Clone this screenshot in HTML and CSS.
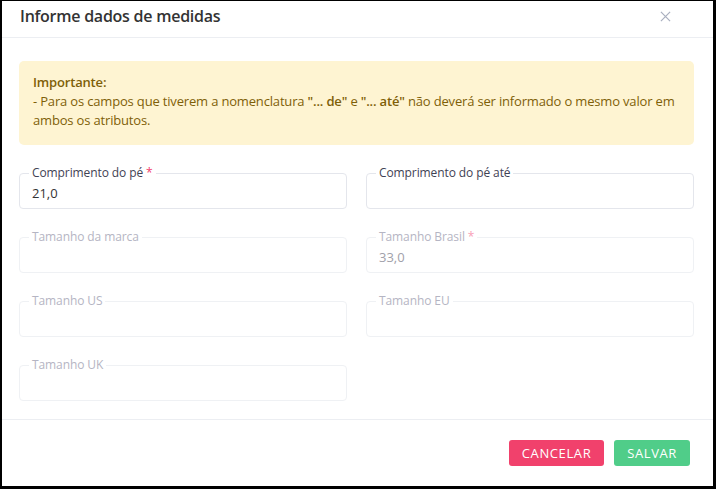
FILE: index.html
```html
<!DOCTYPE html>
<html lang="pt-BR">
<head>
  <meta charset="UTF-8" />
  <title>Informe dados de medidas</title>
  <meta name="viewport" content="width=device-width, initial-scale=1.0" />
  <link rel="stylesheet" href="styles.css">
</head>
<body>

<div class="modal">
  <div class="modal-header">
    <h2>Informe dados de medidas</h2>
    <svg class="close" viewBox="0 0 12 12">
      <path d="M1 1L11 11M11 1L1 11"/>
    </svg>
  </div>

  <div class="modal-body">
    <div class="alert">
      <strong>Importante:</strong><br>
      - Para os campos que tiverem a nomenclatura <b>"... de"</b> e <b>"... até"</b> não deverá ser informado o mesmo valor em ambos os atributos.
    </div>

    <div class="grid">
      <fieldset class="field">
        <legend>Comprimento do pé <span class="req">*</span></legend>
        <input type="text" value="21,0" />
      </fieldset>
      <fieldset class="field">
        <legend>Comprimento do pé até</legend>
        <input type="text" value="" />
      </fieldset>
      <fieldset class="field disabled">
        <legend>Tamanho da marca</legend>
        <input type="text" value="" disabled />
      </fieldset>
      <fieldset class="field disabled">
        <legend>Tamanho Brasil <span class="req">*</span></legend>
        <input type="text" value="33,0" disabled />
      </fieldset>
      <fieldset class="field disabled">
        <legend>Tamanho US</legend>
        <input type="text" value="" disabled />
      </fieldset>
      <fieldset class="field disabled">
        <legend>Tamanho EU</legend>
        <input type="text" value="" disabled />
      </fieldset>
      <fieldset class="field disabled">
        <legend>Tamanho UK</legend>
        <input type="text" value="" disabled />
      </fieldset>
    </div>
  </div>

  <div class="modal-footer">
    <button class="btn btn-cancel">Cancelar</button>
    <button class="btn btn-save">Salvar</button>
  </div>
</div>

</body>
</html>
```

FILE: styles.css
```css
body {
  margin: 0;
  font-family: "Open Sans", Arial, sans-serif;
  background: #000;
}
.modal {
  width: 716px;
  height: 489px;
  box-sizing: border-box;
  background: white;
  border-style: solid;
  border-color: #000;
  border-width: 1px 3px 3px 2px;
  display: flex;
  flex-direction: column;
}
.modal-header {
  height: 37px;
  box-sizing: border-box;
  display: flex;
  align-items: flex-start;
  justify-content: space-between;
  padding: 4px 42px 0 18px;
  border-bottom: 1px solid #eceef2;
}
.modal-header h2 {
  margin: 0;
  font-size: 16px;
  line-height: 22px;
  font-weight: 600;
  color: #333;
  letter-spacing: -0.25px;
}
.close {
  width: 11px;
  height: 11px;
  margin-top: 6px;
  stroke: #a9afbf;
  stroke-width: 1.3;
  fill: none;
}
.modal-body {
  flex: 1;
  padding: 23px 19px 0 17px;
}
.alert {
  background: #fef4d2;
  color: #7e5f08;
  border-radius: 5px;
  padding: 12px 14px 15px 14px;
  font-size: 13px;
  line-height: 19px;
  letter-spacing: -0.17px;
}
.alert strong, .alert b { font-weight: 600; }
.grid {
  display: grid;
  grid-template-columns: 1fr 1fr;
  column-gap: 19px;
  row-gap: 20px;
  margin-top: 20px;
}
.field {
  margin: 0;
  min-width: 0;
  border: 1px solid #e4e6ec;
  border-radius: 4px;
  padding: 0 9px 5px 9px;
}
.field legend {
  font-size: 12px;
  line-height: 16px;
  padding: 0 3px;
  color: #3f4254;
  letter-spacing: -0.1px;
}
.field .req { color: #f1416c; }
.field input {
  width: 100%;
  box-sizing: border-box;
  border: none;
  outline: none;
  background: transparent;
  font-family: inherit;
  font-size: 13px;
  height: 20px;
  padding: 0 3px;
  color: #333;
}
.field.disabled { border-color: #eff1f4; }
.field.disabled legend { color: #b5b5c3; }
.field.disabled .req { color: #f8a0b6; }
.field.disabled input { color: #a1a1aa; }
.modal-footer {
  height: 66px;
  border-top: 1px solid #eceef2;
  display: flex;
  justify-content: flex-end;
  align-items: center;
  gap: 10px;
  padding: 0 23px 0 0;
}
.btn {
  border: none;
  border-radius: 3px;
  color: white;
  font-family: inherit;
  font-size: 13px;
  letter-spacing: 0.6px;
  text-transform: uppercase;
  height: 26px;
  padding: 0 13px;
  cursor: pointer;
}
.btn-cancel { background: #f1416c; }
.btn-save { background: #50cd89; }
```
